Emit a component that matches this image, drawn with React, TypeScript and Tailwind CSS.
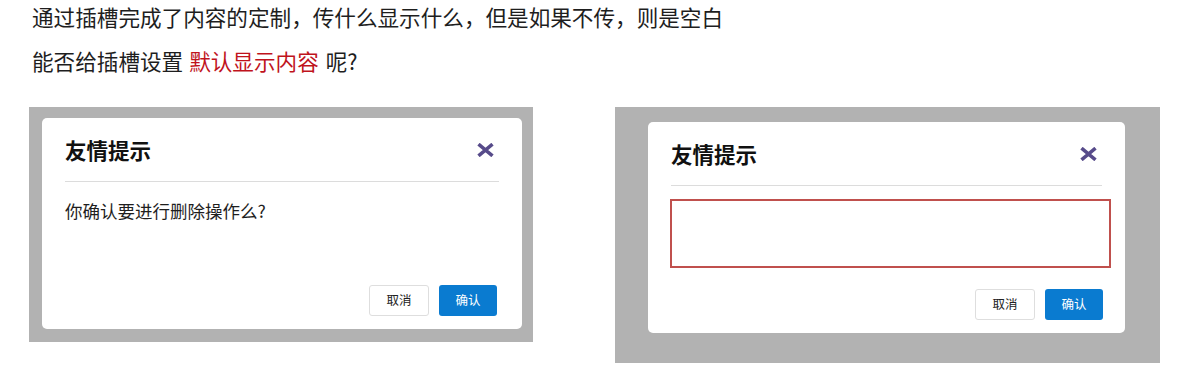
import React from "react";

const FONT = '"Noto Sans CJK SC", "Noto Sans", "Liberation Sans", sans-serif';

function CloseIcon() {
  return (
    <svg width="17" height="14" viewBox="0 0 17 14" className="block">
      <path d="M1.5 1.2 L15.5 12.8 M15.5 1.2 L1.5 12.8" stroke="#574b8a" strokeWidth="3.6" strokeLinecap="butt" fill="none" />
    </svg>
  );
}

function Footer({ className = "" }: { className?: string }) {
  return (
    <div className={"flex justify-end gap-[10px] " + className}>
      <button className="h-[31px] w-[60px] rounded-[3px] border border-[#dedede] bg-white text-[12.5px] text-[#222]">
        取消
      </button>
      <button className="h-[31px] w-[58px] rounded-[3px] bg-[#0a7bd0] text-[12.5px] text-white">
        确认
      </button>
    </div>
  );
}

function Card({ children, footerClass, fill }: { children: React.ReactNode; footerClass: string; fill?: boolean }) {
  return (
    <div className="flex h-[211px] w-full flex-col rounded-[5px] bg-white px-[23px] pb-[13px]">
      <div className="flex h-[64px] shrink-0 items-center justify-between border-b border-[#dcdcdc]">
        <span className="text-[21.5px] font-bold leading-none text-[#111]">友情提示</span>
        <span className="mr-[5px]">
          <CloseIcon />
        </span>
      </div>
      {children}
      <Footer className={(fill ? "mt-auto " : "") + footerClass} />
    </div>
  );
}

export default function App() {
  return (
    <div className="h-[387px] w-[1197px] overflow-hidden bg-white" style={{ fontFamily: FONT }}>
      <div className="px-[32px] text-[21.6px] text-[#1e1e1e]">
        <div className="-mt-[1px] leading-[36px]">通过插槽完成了内容的定制，传什么显示什么，但是如果不传，则是空白</div>
        <div className="mt-[8px] leading-[36px]">
          能否给插槽设置<span className="inline-block w-[6px]" />
          <span className="text-[#c0131c]">默认显示内容</span>
          <span className="inline-block w-[7px]" />呢?
        </div>
      </div>
      <div className="mt-[28px] flex items-start">
        <div className="ml-[29px] h-[235px] w-[504px] bg-[#b2b2b2] pl-[13px] pr-[11px] pt-[11px]">
          <Card footerClass="mr-[2px]" fill>
            <div className="pt-[17px] text-[17.5px] leading-[24px] text-[#1e1e1e]">你确认要进行删除操作么?</div>
          </Card>
        </div>
        <div className="ml-[82px] h-[256px] w-[545px] bg-[#b2b2b2] pl-[33px] pr-[35px] pt-[15px]">
          <Card footerClass="mt-[21px] -mr-[1px]">
            <div className="mt-[13px] -ml-[1px] -mr-[9px] h-[69px] border-2 border-[#c0504d]" />
          </Card>
        </div>
      </div>
    </div>
  );
}
